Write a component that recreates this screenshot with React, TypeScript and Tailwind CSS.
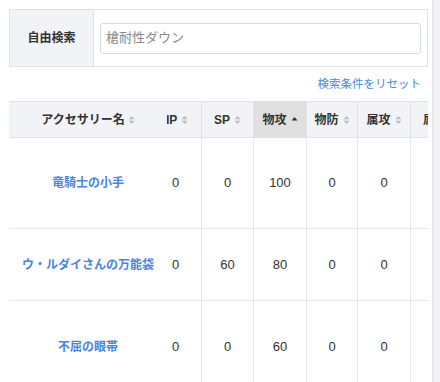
import React from 'react';

type Col = { key: string; label: string; w: string; head?: string; sorted?: boolean };

const cols: Col[] = [
  { key: 'hp', label: 'HP', w: 'w-[52px] ml-[-17px]', head: 'pr-[2px]' },
  { key: 'sp', label: 'SP', w: 'w-[52px]' },
  { key: 'atk', label: '物攻', w: 'w-[53px]', sorted: true },
  { key: 'def', label: '物防', w: 'w-[51px]' },
  { key: 'eatk', label: '属攻', w: 'w-[53px]' },
  { key: 'edef', label: '属防', w: 'w-[60px]' },
];

const rows = [
  { name: '竜騎士の小手', h: 'h-[91px]', v: [0, 0, 100, 0, 0, ''] },
  { name: 'ウ・ルダイさんの万能袋', h: 'h-[72px]', v: [0, 60, 80, 0, 0, ''] },
  { name: '不屈の眼帯', h: 'h-[92px]', v: [0, 0, 60, 0, 0, ''] },
];

const SortIcon = ({ active }: { active?: boolean }) =>
  active ? (
    <svg width="7" height="10" viewBox="0 0 7 10" className="shrink-0">
      <path d="M0.5 5.5 L3.5 2 L6.5 5.5 Z" fill="#333" />
    </svg>
  ) : (
    <svg width="7" height="10" viewBox="0 0 7 10" className="shrink-0">
      <path d="M0.5 4.3 L3.5 1 L6.5 4.3 Z" fill="#bcbcbc" />
      <path d="M0.5 5.7 L6.5 5.7 L3.5 9 Z" fill="#bcbcbc" />
    </svg>
  );

const App: React.FC = () => {
  return (
    <div className="w-[440px] h-[382px] bg-white flex overflow-hidden font-['Liberation_Sans','Noto_Sans_CJK_JP',sans-serif] text-[#333]">
      <div className="flex-1 pl-[9px] pr-[4px] pt-[9px] min-w-0">
        {/* search */}
        <div className="flex h-[58px] border border-[#dfe2e9]">
          <div className="w-[84px] bg-[#f2f3f7] border-r border-[#dfe2e9] flex items-center justify-center text-[12px] font-bold">
            自由検索
          </div>
          <div className="flex-1 flex items-center px-[6px]">
            <div className="w-full h-[31px] border border-[#d5d9e2] rounded-[3px] flex items-center px-[5px] text-[13px] text-[#8a8a8a]">
              槍耐性ダウン
            </div>
          </div>
        </div>

        <div className="flex justify-end pr-[7px] mt-[10px] h-[16px] items-center">
          <span className="text-[11.5px] text-[#4a86e8]">検索条件をリセット</span>
        </div>

        {/* table, scrolled sideways under a fixed name column */}
        <div className="mt-[8px] border-t border-[#dfe2e9]">
          <div className="flex h-[36px] bg-[#f2f3f7] border-b border-[#dfe2e9]">
            <div className="w-[158px] shrink-0 flex items-center justify-center gap-[3px] text-[12px] font-bold relative z-10 bg-[#f2f3f7]">
              アクセサリー名
              <SortIcon />
            </div>
            <div className="flex-1 flex overflow-hidden">
              {cols.map(c => (
                <div
                  key={c.key}
                  className={`${c.w} ${c.head ?? ''} shrink-0 flex items-center justify-center gap-[4px] text-[12px] font-bold border-r border-[#dfe2e9] ${c.sorted ? 'bg-[#e0e0e0]' : ''}`}
                >
                  {c.label}
                  <SortIcon active={c.sorted} />
                </div>
              ))}
            </div>
          </div>

          {rows.map(r => (
            <div key={r.name} className={`flex ${r.h} border-b border-[#e3e6ee]`}>
              <div className="w-[158px] shrink-0 flex items-center justify-center text-[12px] font-bold text-[#4a84e4] relative z-10 bg-white">
                {r.name}
              </div>
              <div className="flex-1 flex overflow-hidden">
                {cols.map((c, i) => (
                  <div
                    key={c.key}
                    className={`${c.w} shrink-0 flex items-center justify-center text-[13px] border-r border-[#e3e6ee]`}
                  >
                    {r.v[i]}
                  </div>
                ))}
              </div>
            </div>
          ))}
        </div>
      </div>
      <div className="w-[8px] shrink-0 bg-[#f3f3f5] border-l border-[#e6e6e9]" />
    </div>
  );
};

export default App;
